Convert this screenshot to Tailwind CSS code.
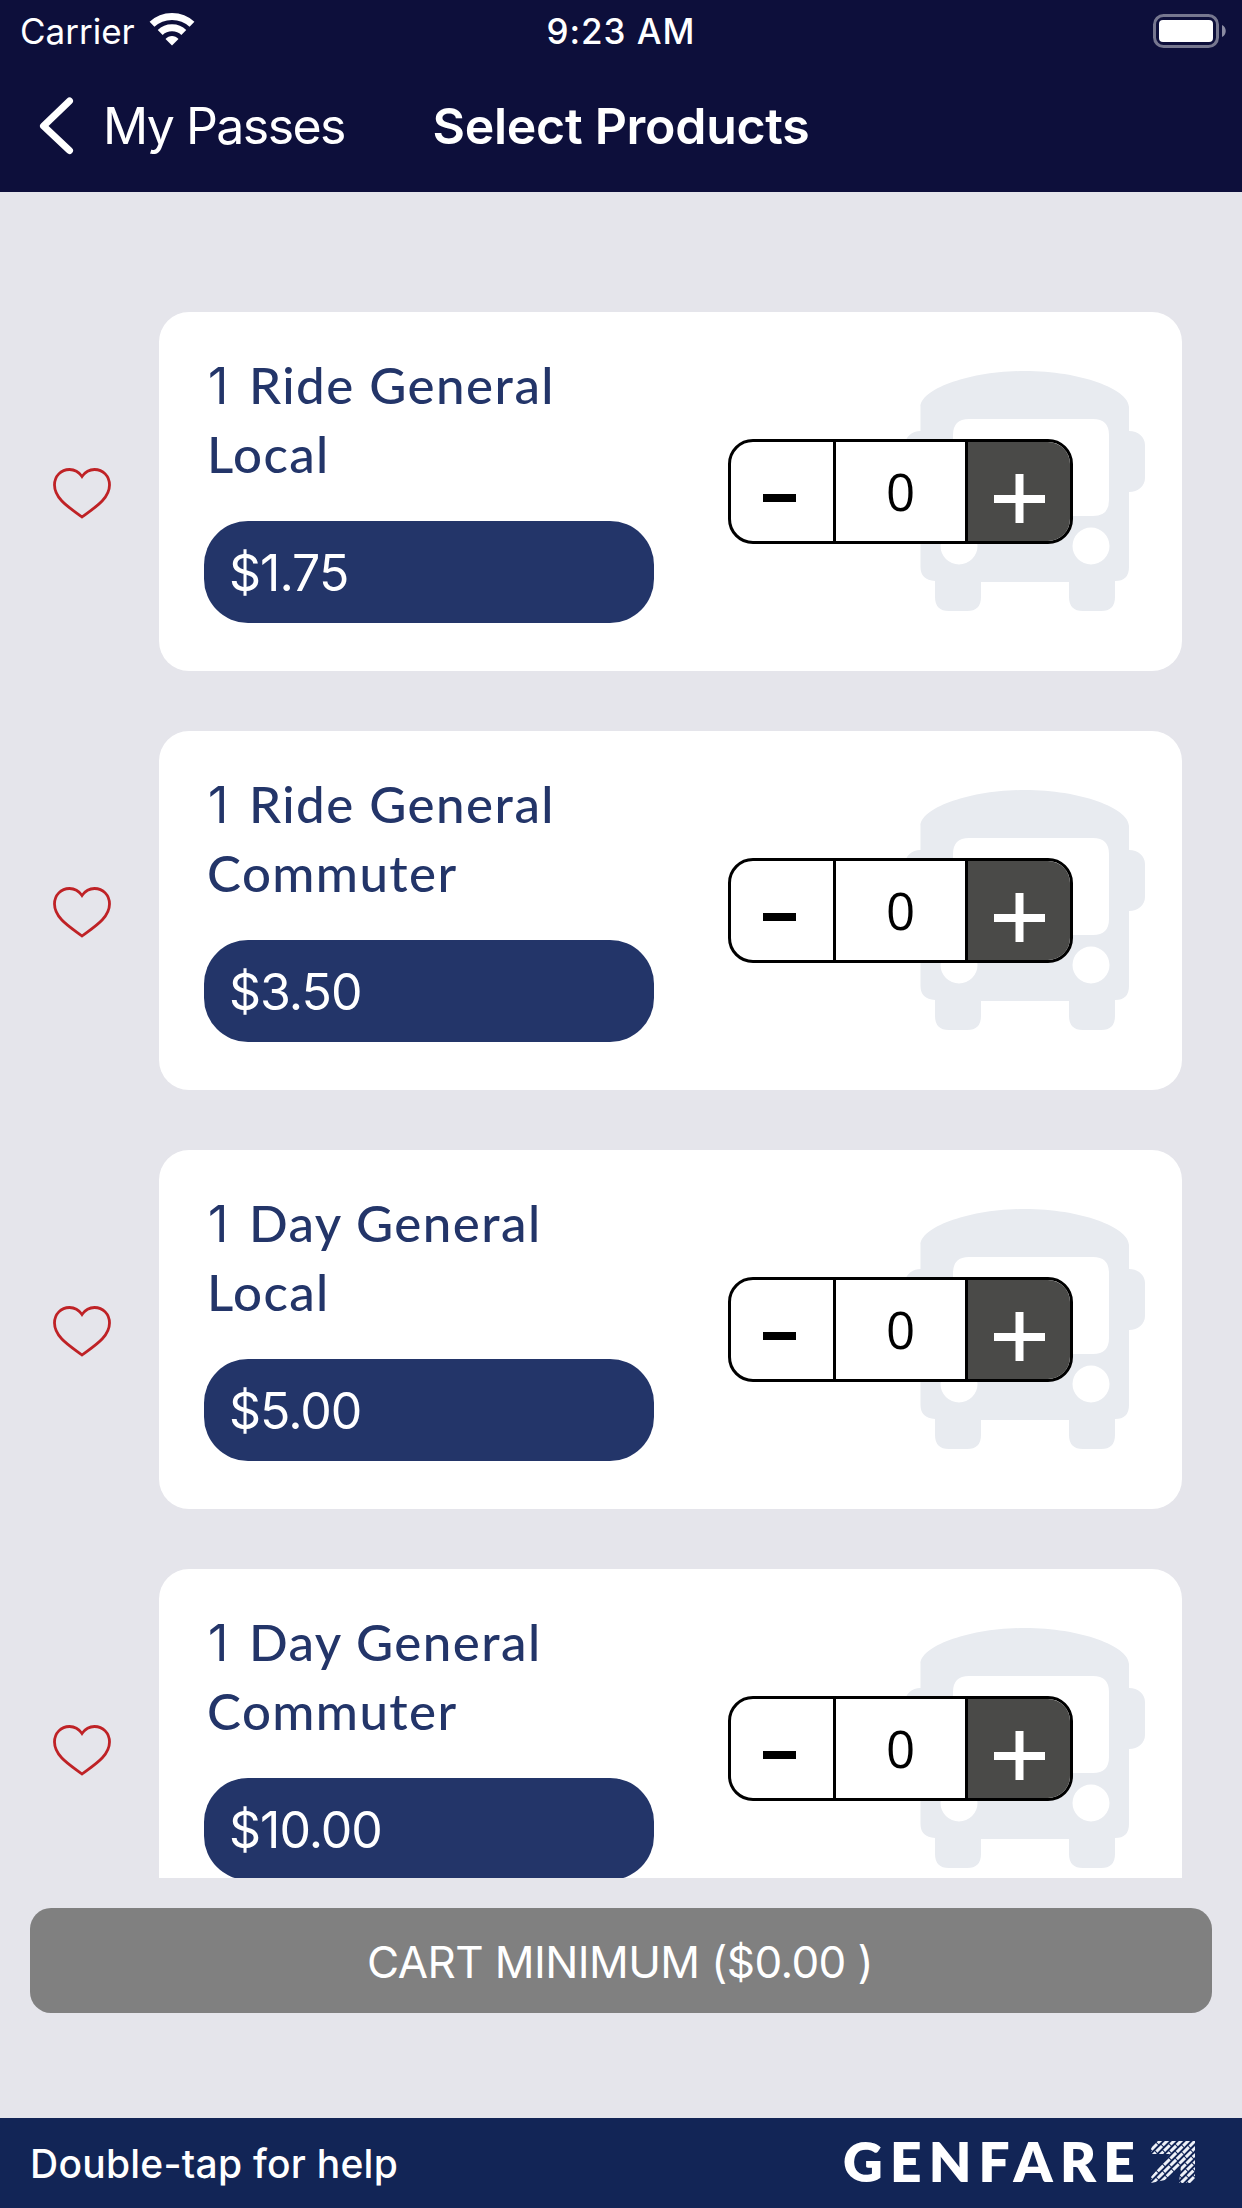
<!DOCTYPE html>
<html lang="en">
<head>
<meta charset="utf-8">
<title>Select Products</title>
<script src="https://cdn.jsdelivr.net/npm/@tailwindcss/browser@4"></script>
</head>
<body class="w-[1242px] h-[2208px] overflow-hidden flex flex-col bg-[#e5e5eb] font-[Inter,sans-serif]">

<header class="h-[192px] shrink-0 bg-[#0d0f3b] text-white">
  <!-- Status bar -->
  <div class="h-[62px] grid grid-cols-[1fr_auto_1fr] items-center text-[35px] leading-[62px] whitespace-nowrap">
    <div class="flex pl-5">
      <span>Carrier</span>
      <svg class="ml-[14px] mt-[12px]" width="46" height="35" viewBox="0 0 46 35" fill="none" stroke="#fff">
        <path d="M3 12.300 C14 1.800 32 1.800 43 12.300" stroke-width="7"/>
        <path d="M11.200 20.500 C17.500 14.300 28.500 14.300 34.800 20.500" stroke-width="7"/>
        <path d="M16.500 27 C20 23 26 23 29.500 27 L23 33.500 Z" fill="#fff" stroke="none"/>
      </svg>
    </div>
    <span class="font-medium tracking-[0.95px]">9:23 AM</span>
    <svg class="justify-self-end mr-[15px]" width="74" height="36" viewBox="0 0 74 36">
      <rect x="1.500" y="2.500" width="63" height="31" rx="9" fill="none" stroke="#76778f" stroke-width="3"/>
      <rect x="6" y="7" width="54" height="22" rx="4" fill="#fff"/>
      <path d="M69 12 C74 14 74 22 69 24 Z" fill="#8a8ba2"/>
    </svg>
  </div>
  <!-- Navigation bar -->
  <nav class="h-[128px] grid grid-cols-[1fr_auto_1fr] items-center text-[50px] leading-[60px] whitespace-nowrap">
    <div class="flex items-center pl-[39px]">
      <svg width="36" height="60" viewBox="0 0 36 60" fill="none" stroke="#fff" stroke-width="7" stroke-linecap="round" stroke-linejoin="round"><path d="M30.500 5 L4.500 30 L30.500 54.500"/></svg>
      <span class="ml-[28px] tracking-[-1.550px]">My Passes</span>
    </div>
    <h1 class="font-semibold tracking-[-0.280px]">Select Products</h1>
  </nav>
</header>

<main id="list" class="h-[1686px] shrink-0 overflow-hidden pt-[120px] flex flex-col gap-[60px]"></main>

<template id="row">
  <section class="flex items-center h-[359px] shrink-0">
    <svg class="ml-[53px] mt-[3px]" width="58" height="51" viewBox="0 0 58 51" fill="none" stroke="#bf2226" stroke-width="2.800"><path d="M29 8.500 C25.500 3.500 21 1.500 16.500 1.500 C8 1.500 1.500 8 1.500 17 C1.500 31 17 40 29 49 C41 40 56.500 31 56.500 17 C56.500 8 50 1.500 41.500 1.500 C37 1.500 32.500 3.500 29 8.500 Z"/></svg>
    <div class="relative ml-[48px] w-[1023px] h-[359px] rounded-[30px] bg-white flex items-center">
      <svg class="absolute right-[37px] top-[59px]" width="240" height="240" viewBox="0 0 240 240" fill="#e8ebf0">
        <path fill-rule="evenodd" d="M15.500 36 C15.500 18 65 0 120 0 C175 0 224 18 224 36 V60 C233 60 240 66 240 74 V107 C240 115 233 121 224 121 V196 Q224 210 210 210 V226 Q210 240 196 240 H178 Q164 240 164 226 V211 H76 V226 Q76 240 62 240 H44 Q30 240 30 226 V210 Q15.500 209 15.500 196 V121 C7 121 0 115 0 107 V74 C0 66 7 60 15.500 60 Z M64 48 Q48 48 48 64 V129 Q48 145 64 145 H188 Q204 145 204 129 V64 Q204 48 188 48 Z M72.500 175 a18.500 18.500 0 1 0 -37 0 a18.500 18.500 0 1 0 37 0 Z M204.500 175 a18.500 18.500 0 1 0 -37 0 a18.500 18.500 0 1 0 37 0 Z"/>
      </svg>
      <div class="self-start pl-[45px] pt-[38px] w-[495px]">
        <h2 class="pl-[4px] font-[Lato,sans-serif] font-medium text-[51px] leading-[69px] text-[#233569] whitespace-nowrap"><span class="inline-block w-[28px] font-[Inter,sans-serif] font-normal text-[50px] leading-none">1</span> <span data-a class="tracking-[1.500px]"></span><br><span data-b class="tracking-[1.400px] -ml-px"></span></h2>
        <div class="mt-[33px] w-[450px] h-[102px] rounded-[44px] bg-[#233569] text-white text-[50px] leading-[105px] pl-[25px] tracking-[-1px]" data-p></div>
      </div>
      <div class="relative ml-[74px] w-[345px] h-[105px] rounded-[25px] border-[3px] border-black bg-white overflow-hidden flex">
        <button class="w-[102px] flex items-center justify-center"><svg class="mt-[13px] mr-[5px]" width="33" height="8"><rect width="33" height="8"/></svg></button>
        <div class="w-[135px] border-x-[3px] border-black text-center font-['Open_Sans',sans-serif] text-[51px] leading-[99px]">0</div>
        <button class="grow bg-[#4a4a48] flex items-center justify-center"><svg class="mt-[14px]" width="51" height="49" viewBox="0 0 51 49" fill="#fff"><path d="M21.500 0 H29.500 V21 H51 V29 H29.500 V49 H21.500 V29 H0 V21 H21.500 Z"/></svg></button>
      </div>
    </div>
  </section>
</template>

<button class="mt-[30px] mx-[30px] h-[105px] shrink-0 rounded-[21px] bg-[#808080] text-white text-[44px] leading-[105px] pt-[2px] pr-[2px] tracking-[-0.580px] whitespace-nowrap">CART MINIMUM ($0.00 )</button>

<footer class="mt-auto h-[90px] shrink-0 bg-[#122556] text-white flex items-center justify-between pl-[30px] pr-[47px] whitespace-nowrap">
  <span class="font-medium text-[39px] tracking-[0.250px] leading-[90px] pt-px">Double-tap for help</span>
  <div class="flex items-center">
    <span class="font-[Lato,sans-serif] font-extrabold text-[55px] leading-[86px] tracking-[7.200px] pb-[4px]">GENFARE</span>
    <svg class="ml-[9px] mb-[2px]" width="44" height="42" viewBox="0 0 44 42">
      <defs><clipPath id="arrow"><path d="M3 0 H44 V38 L40 42 H28 L30 24 L14 39 L0 42 V36 L19 13 H0 V8 Z"/></clipPath></defs>
      <path clip-path="url(#arrow)" stroke="#eef1f8" stroke-width="3" stroke-dasharray="8 1" d="M-6 15 L14 -5 M-1 17 L21 -5 M-6 29 L28 -5 M-6 36 L35 -5 M-6 43 L42 -5 M-6 50 L49 -5 M3 48 L50 1 M10 48 L50 8 M17 48 L50 15 M24 48 L50 22 M31 48 L50 29"/>
    </svg>
  </div>
</footer>

<script>
const products = [
  ['Ride General', 'Local', '$1.75'],
  ['Ride General', 'Commuter', '$3.50'],
  ['Day General', 'Local', '$5.00'],
  ['Day General', 'Commuter', '$10.00'],
];
const list = document.getElementById('list');
for (const [a, b, p] of products) {
  const n = document.getElementById('row').content.cloneNode(true);
  n.querySelector('[data-a]').textContent = a;
  n.querySelector('[data-b]').textContent = b;
  n.querySelector('[data-p]').textContent = p;
  list.append(n);
}
</script>
</body>
</html>
